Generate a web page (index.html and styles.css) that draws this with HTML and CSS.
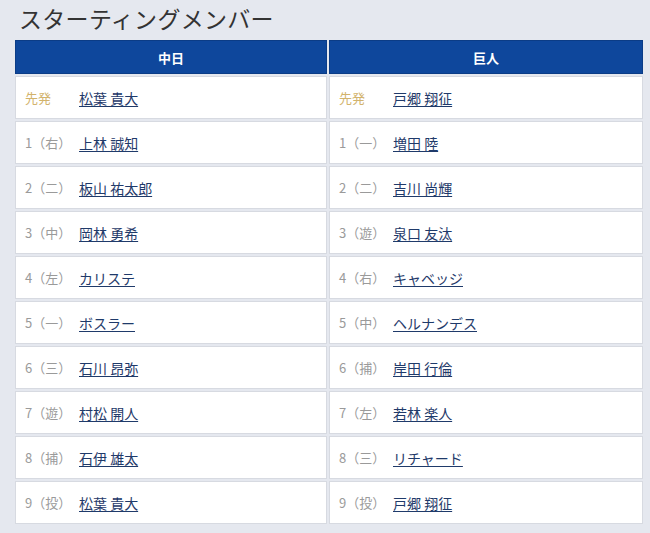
FILE: index.html
```html
<!DOCTYPE html>
<html lang="ja">
<head>
<meta charset="utf-8">
<link rel="stylesheet" href="styles.css">
</head>
<body>
<h1 class="title">スターティングメンバー</h1>
<div class="lineup">
  <div class="team">
    <div class="head">中日</div>
    <div class="row"><span class="pos starter">先発</span><a class="name" href="#">松葉 貴大</a></div>
    <div class="row"><span class="pos">1（右）</span><a class="name" href="#">上林 誠知</a></div>
    <div class="row"><span class="pos">2（二）</span><a class="name" href="#">板山 祐太郎</a></div>
    <div class="row"><span class="pos">3（中）</span><a class="name" href="#">岡林 勇希</a></div>
    <div class="row"><span class="pos">4（左）</span><a class="name" href="#">カリステ</a></div>
    <div class="row"><span class="pos">5（一）</span><a class="name" href="#">ボスラー</a></div>
    <div class="row"><span class="pos">6（三）</span><a class="name" href="#">石川 昂弥</a></div>
    <div class="row"><span class="pos">7（遊）</span><a class="name" href="#">村松 開人</a></div>
    <div class="row"><span class="pos">8（捕）</span><a class="name" href="#">石伊 雄太</a></div>
    <div class="row"><span class="pos">9（投）</span><a class="name" href="#">松葉 貴大</a></div>
  </div>
  <div class="team">
    <div class="head">巨人</div>
    <div class="row"><span class="pos starter">先発</span><a class="name" href="#">戸郷 翔征</a></div>
    <div class="row"><span class="pos">1（一）</span><a class="name" href="#">増田 陸</a></div>
    <div class="row"><span class="pos">2（二）</span><a class="name" href="#">吉川 尚輝</a></div>
    <div class="row"><span class="pos">3（遊）</span><a class="name" href="#">泉口 友汰</a></div>
    <div class="row"><span class="pos">4（右）</span><a class="name" href="#">キャベッジ</a></div>
    <div class="row"><span class="pos">5（中）</span><a class="name" href="#">ヘルナンデス</a></div>
    <div class="row"><span class="pos">6（捕）</span><a class="name" href="#">岸田 行倫</a></div>
    <div class="row"><span class="pos">7（左）</span><a class="name" href="#">若林 楽人</a></div>
    <div class="row"><span class="pos">8（三）</span><a class="name" href="#">リチャード</a></div>
    <div class="row"><span class="pos">9（投）</span><a class="name" href="#">戸郷 翔征</a></div>
  </div>
</div>
</body>
</html>
```
FILE: styles.css
```css
html, body {
  margin: 0;
  padding: 0;
  background: #e5e8ef;
}
body {
  font-family: "Noto Sans CJK JP", "Noto Sans", sans-serif;
  color: #333;
}
.title {
  margin: 0 0 6px 0;
  padding: 2px 0 0 19px;
  font-size: 23px;
  line-height: 32px;
  font-weight: 400;
  color: #333;
  letter-spacing: 0.3px;
}
.lineup {
  margin-left: 15px;
  width: 628px;
  display: grid;
  grid-template-columns: 312px 314px;
  column-gap: 2px;
}
.team {
  display: flex;
  flex-direction: column;
  gap: 2px;
}
.head {
  height: 34px;
  background: #0e479c;
  color: #fff;
  font-weight: 700;
  font-size: 13px;
  display: flex;
  align-items: center;
  justify-content: center;
  box-shadow: inset 0 0 0 1px #0b3c86;
}
.row {
  height: 43px;
  box-sizing: border-box;
  background: #fff;
  border: 1px solid #d7dae1;
  display: flex;
  align-items: center;
  padding-left: 9px;
  font-size: 14px;
}
.pos {
  width: 54px;
  flex: none;
  color: #9a9a9a;
  font-size: 13px;
}
.pos.starter {
  color: #d2b36c;
}
.name {
  color: #1f3a6a;
  text-decoration: underline;
  text-underline-offset: 2px;
}
```
